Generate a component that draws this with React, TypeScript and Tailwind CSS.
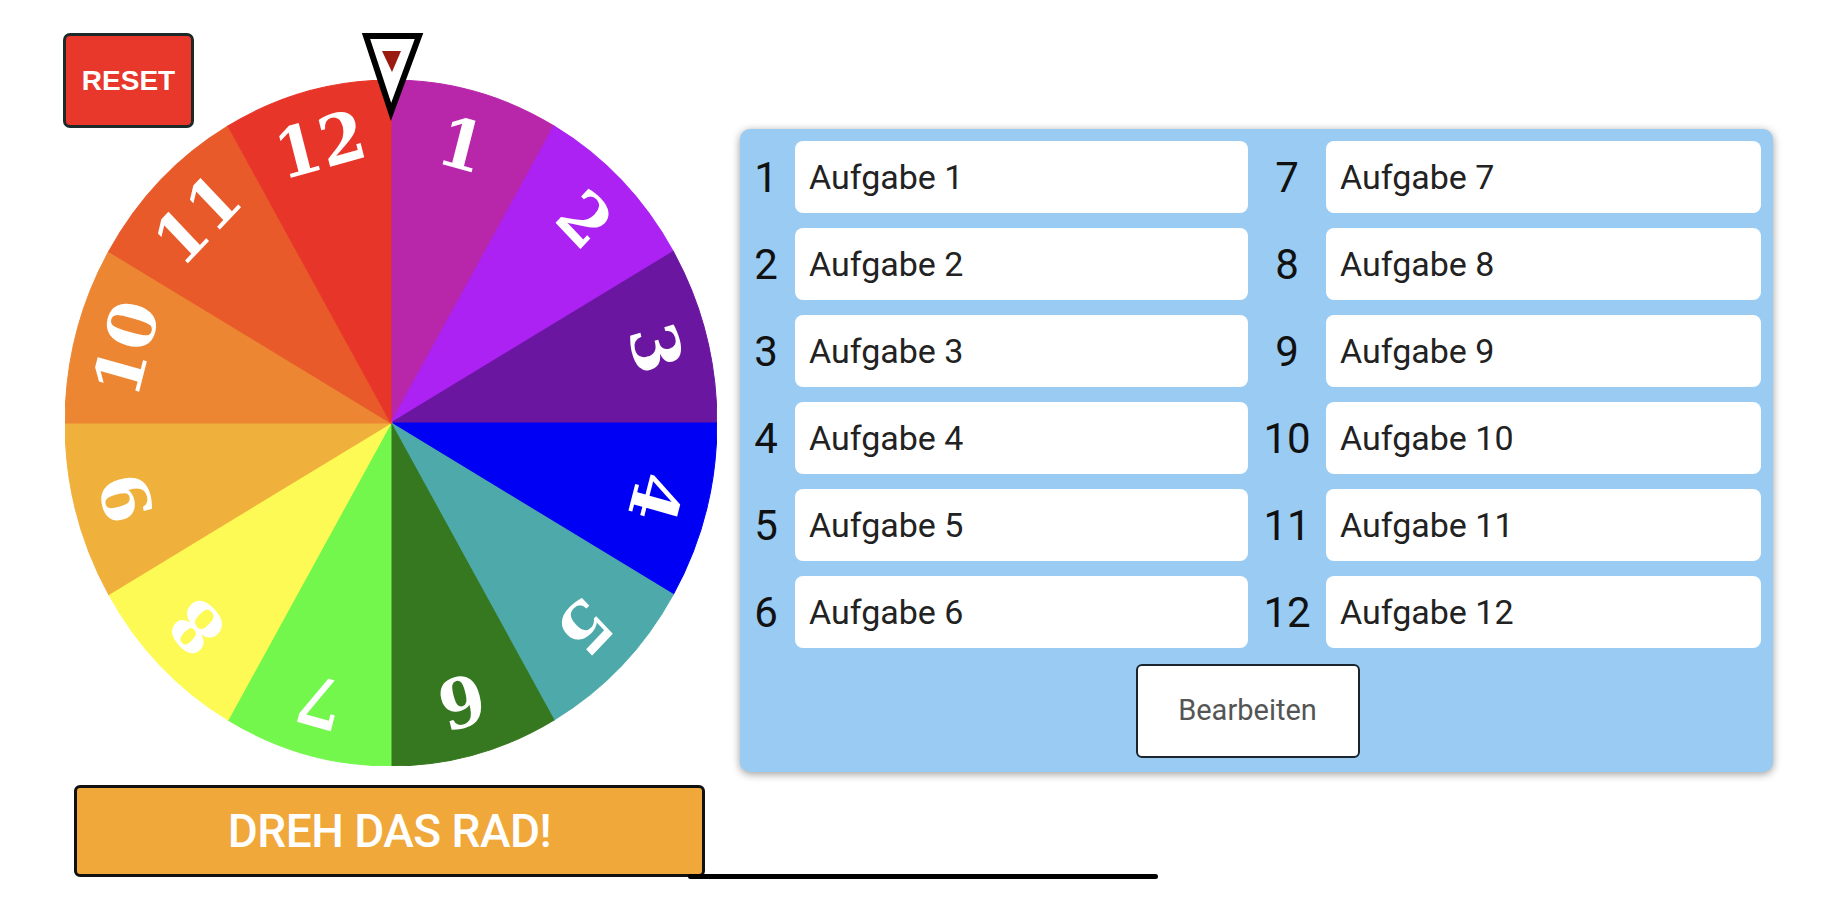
import React from 'react';

const segments = [
  '#b826aa',
  '#ab22f2',
  '#6a16a0',
  '#0000f5',
  '#4eaaaa',
  '#367820',
  '#74f74c',
  '#fefa55',
  '#f0b03c',
  '#ec8633',
  '#e85a2a',
  '#e8352a',
];

const pt = (deg: number, r: number) => {
  const a = (deg * Math.PI) / 180;
  return [r * Math.sin(a), -r * Math.cos(a)];
};

const Wheel: React.FC = () => (
  <svg
    viewBox="-100 -100 200 200"
    preserveAspectRatio="none"
    className="w-[652px] h-[686px] block"
  >
    {segments.map((color, i) => {
      const [x1, y1] = pt(i * 30, 100);
      const [x2, y2] = pt((i + 1) * 30, 100);
      return (
        <path
          key={i}
          d={`M0 0 L${x1} ${y1} A100 100 0 0 1 ${x2} ${y2} Z`}
          fill={color}
          stroke={color}
          strokeWidth={0.3}
        />
      );
    })}
    {segments.map((_, i) => (
      <text
        key={i}
        transform={`rotate(${i * 30 + 15}) translate(0 -84)`}
        textAnchor="middle"
        dominantBaseline="central"
        fill="#fff"
        fontSize={20}
        fontWeight={700}
        fontFamily="'DejaVu Serif', serif"
      >
        {i + 1}
      </text>
    ))}
  </svg>
);

const Pointer: React.FC = () => (
  <svg viewBox="0 0 70 100" className="w-[70px] h-[100px] absolute left-[358px] top-[28px]">
    <polygon
      points="8,8 61,8 33,84"
      fill="#fff"
      stroke="#000"
      strokeWidth={6}
      strokeLinejoin="miter"
    />
    <polygon points="24,23 43,23 34,44" fill="#9a1a10" />
  </svg>
);

const tasks = [1, 2, 3, 4, 5, 6];

const App: React.FC = () => (
  <div className="relative w-[1843px] h-[900px] bg-white flex font-['Roboto',sans-serif] overflow-hidden">
    {/* Wheel side */}
    <div className="flex flex-col pl-[65px] pt-[80px]">
      <Wheel />
      <button className="mt-[19px] ml-[9px] w-[631px] h-[92px] bg-[#f0a83a] border-[3px] border-[#111] rounded-[6px] text-white text-[46px] font-medium tracking-[-0.5px]">
        DREH DAS RAD!
      </button>
    </div>

    <button className="absolute left-[63px] top-[33px] w-[131px] h-[95px] bg-[#e8372b] border-[3px] border-[#1d2a2a] rounded-[7px] text-white text-[28px] font-bold font-['Liberation_Sans',sans-serif]">
      RESET
    </button>
    <Pointer />
    <div className="absolute left-[688px] top-[874px] w-[470px] h-[5px] bg-black rounded-full" />

    {/* Task panel */}
    <div className="mt-[129px] ml-[23px] w-[1033px] h-[643px] bg-[#99cbf3] rounded-[10px] shadow-[0_2px_8px_rgba(0,0,0,0.4)] pl-[8px] pr-[12px] pt-[12px] flex flex-col">
      <div className="grid grid-cols-[47px_453px_78px_435px] gap-y-[15px]">
        {tasks.map((n) => (
          <React.Fragment key={n}>
            <div className="h-[72px] pr-[11px] flex items-center justify-center text-[42px] text-[#111]">
              {n}
            </div>
            <div className="h-[72px] bg-white rounded-[8px] pl-[14px] flex items-center text-[34px] text-[#222]">
              Aufgabe {n}
            </div>
            <div className="h-[72px] flex items-center justify-center text-[42px] text-[#111]">
              {n + 6}
            </div>
            <div className="h-[72px] bg-white rounded-[8px] pl-[14px] flex items-center text-[34px] text-[#222]">
              Aufgabe {n + 6}
            </div>
          </React.Fragment>
        ))}
      </div>
      <div className="flex justify-center mt-[16px] pr-[14px]">
        <button className="w-[224px] h-[94px] bg-white border-2 border-[#1a2530] rounded-[6px] text-[29px] text-[#555]">
          Bearbeiten
        </button>
      </div>
    </div>
  </div>
);

export default App;
